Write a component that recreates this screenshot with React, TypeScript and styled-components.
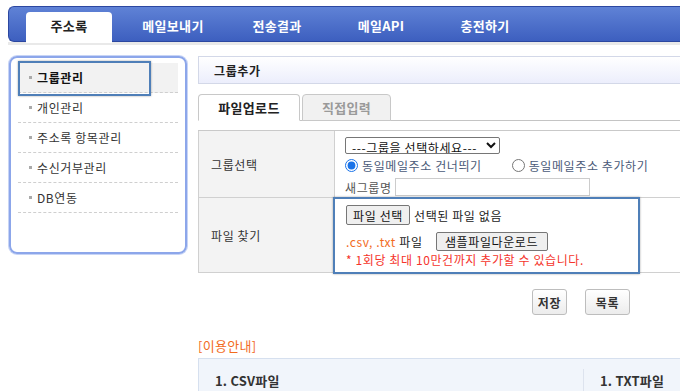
import styled, { createGlobalStyle } from "styled-components";

const Global = createGlobalStyle`
    html, body {
        margin: 0;
        padding: 0;
        background: #fff;
        overflow: hidden;
    }
    body {
        font-family: "Noto Sans CJK KR", "Noto Sans", sans-serif;
        font-size: 12px;
        color: #333;
    }
    * { box-sizing: border-box; }
`;

const Page = styled.div`
    width: 980px;
    padding: 6px 0 0 8px;
`;

const TopNav = styled.nav`
    display: flex;
    align-items: flex-end;
    gap: 18px;
    height: 36px;
    padding-left: 17px;
    background: linear-gradient(#5f82d6, #3d5fbf);
    border: 1px solid #2c47a0;
    border-right: none;
    border-radius: 6px 0 0 6px;
`;

const NavTab = styled.div<{ $active?: boolean }>`
    width: 86px;
    height: 31px;
    margin-bottom: -2px;
    padding-bottom: 5px;
    display: flex;
    align-items: center;
    justify-content: center;
    font-size: 13px;
    font-weight: bold;
    letter-spacing: 0.3px;
    color: ${(p) => (p.$active ? "#222" : "#fff")};
    background: ${(p) => (p.$active ? "#fff" : "transparent")};
    border-radius: 4px 4px 0 0;
`;

const NavShadow = styled.div`
    height: 3px;
    background: #e9e9e9;
`;

const Body = styled.div`
    display: flex;
    align-items: flex-start;
    gap: 11px;
    margin-top: 11px;
    letter-spacing: 0.6px;
`;

const Side = styled.aside`
    position: relative;
    width: 178px;
    height: 198px;
    margin-left: 1px;
    padding: 5px 7px;
    border: 2px solid #8ca6ea;
    border-radius: 8px;
    box-shadow: 0 0 0 1px #c7d4f6;
`;

const SideItem = styled.div<{ $on?: boolean }>`
    display: flex;
    align-items: center;
    gap: 5px;
    height: 30px;
    padding-left: 11px;
    border-bottom: 1px dashed #cfcfcf;
    background: ${(p) => (p.$on ? "#f2f2f2" : "transparent")};
    font-weight: ${(p) => (p.$on ? "bold" : "normal")};
    color: ${(p) => (p.$on ? "#111" : "#333")};
    &::before {
        content: "";
        width: 3px;
        height: 3px;
        background: #aaa;
    }
`;

const Mark = styled.div<{ $x: number; $y: number; $w: number; $h: number }>`
    position: absolute;
    left: ${(p) => p.$x}px;
    top: ${(p) => p.$y}px;
    width: ${(p) => p.$w}px;
    height: ${(p) => p.$h}px;
    border: 2px solid #4f7fb8;
    box-shadow: 0 0 2px rgba(0, 0, 0, 0.35);
    pointer-events: none;
`;

const Main = styled.main`
    position: relative;
    width: 766px;
`;

const TitleBar = styled.div`
    height: 28px;
    display: flex;
    align-items: center;
    padding-left: 15px;
    font-weight: bold;
    color: #222;
    background: linear-gradient(#fff, #eceefc);
    border: 1px solid #d3d8e8;
`;

const TabRow = styled.div`
    display: flex;
    align-items: flex-end;
    gap: 2px;
    margin-top: 10px;
    border-bottom: 1px solid #c4c4c4;
`;

const FormTab = styled.div<{ $active?: boolean }>`
    width: ${(p) => (p.$active ? 102 : 89)}px;
    height: 27px;
    margin-bottom: -1px;
    display: flex;
    align-items: center;
    justify-content: center;
    font-size: 13px;
    font-weight: bold;
    letter-spacing: 0.3px;
    color: ${(p) => (p.$active ? "#222" : "#9a9a9a")};
    background: ${(p) => (p.$active ? "#fff" : "#f1f1f1")};
    border: 1px solid #c8c8c8;
    border-bottom-color: ${(p) => (p.$active ? "#fff" : "#c8c8c8")};
    border-radius: 4px 4px 0 0;
`;

const Table = styled.div`
    margin-top: 9px;
    border-top: 1px solid #c9c9c9;
    display: grid;
    grid-template-columns: 137px 1fr;
    grid-template-rows: 67px 75px;
`;

const Label = styled.div`
    display: flex;
    align-items: center;
    padding-left: 12px;
    background: #f3f3f3;
    border-left: 1px solid #d0d0d0;
    border-bottom: 1px solid #d0d0d0;
    border-right: 1px solid #d0d0d0;
    color: #333;
`;

const Cell = styled.div`
    display: flex;
    flex-direction: column;
    align-items: flex-start;
    padding: 6px 10px 0;
    border-bottom: 1px solid #d0d0d0;
`;

const Select = styled.select`
    width: 155px;
    height: 17px;
    padding: 0 2px;
    font-family: inherit;
    font-size: 12px;
    letter-spacing: 0.6px;
    color: #111;
    border: 1px solid #767676;
    border-radius: 2px;
    background: #fff;
`;

const RadioRow = styled.div`
    display: flex;
    gap: 30px;
    height: 18px;
    margin-top: 2px;
    color: #4a5a78;
`;

const RadioLabel = styled.label`
    display: flex;
    align-items: center;
    gap: 4px;
    input {
        margin: 0;
        width: 13px;
        height: 13px;
        accent-color: #1a73e8;
    }
`;

const NameRow = styled.div`
    display: flex;
    align-items: center;
    gap: 3px;
    height: 18px;
    margin-top: 4px;
    color: #555;
`;

const TextInput = styled.input`
    width: 195px;
    height: 18px;
    border: 1px solid #ccc;
`;

const FileCell = styled(Cell)`
    position: relative;
    padding: 7px 11px 0;
`;

const FileRow = styled.div<{ $mt?: number }>`
    display: flex;
    align-items: center;
    gap: 4px;
    height: 20px;
    margin-top: ${(p) => p.$mt ?? 0}px;
    color: #222;
`;

const NativeBtn = styled.button<{ $w: number; $ml?: number }>`
    width: ${(p) => p.$w}px;
    height: ${(p) => (p.$ml ? 19 : 20)}px;
    margin-left: ${(p) => p.$ml ?? 0}px;
    padding: 0;
    font-family: inherit;
    font-size: 12px;
    letter-spacing: 0.6px;
    color: #111;
    background: #efefef;
    border: 1px solid #767676;
    border-radius: 2px;
`;

const Orange = styled.span`
    color: #f26b1d;
`;

const Notice = styled.div`
    color: #f5342b;
    height: 17px;
    line-height: 17px;
`;

const ActionRow = styled.div`
    display: flex;
    justify-content: center;
    gap: 18px;
    margin-top: 16px;
`;

const ActionBtn = styled.button<{ $w: number }>`
    width: ${(p) => p.$w}px;
    height: 26px;
    padding: 0;
    font-family: inherit;
    font-size: 12px;
    font-weight: bold;
    letter-spacing: 0.6px;
    color: #333;
    background: linear-gradient(#fff, #ececec);
    border: 1px solid #bdbdbd;
    border-radius: 3px;
`;

const GuideTitle = styled.div`
    margin-top: 21px;
    font-size: 13px;
    letter-spacing: 0.3px;
    color: #f26b1d;
`;

const Guide = styled.div`
    display: grid;
    grid-template-columns: 384px 1fr;
    margin-top: 3px;
    height: 60px;
    background: #f1f5fb;
    border: 1px solid #d6e0ef;
`;

const GuideCol = styled.div<{ $line?: boolean }>`
    padding: 12px 16px;
    font-size: 13px;
    font-weight: bold;
    letter-spacing: 0.2px;
    color: #333;
    border-left: ${(p) => (p.$line ? "1px solid #dde3ee" : "none")};
    margin-top: ${(p) => (p.$line ? 10 : 0)}px;
    padding-top: ${(p) => (p.$line ? 2 : 12)}px;
`;

export default function App() {
    const navs = ["주소록", "메일보내기", "전송결과", "메일API", "충전하기"];
    const menu = ["그룹관리", "개인관리", "주소록 항목관리", "수신거부관리", "DB연동"];

    return (
        <Page>
            <Global />
            <TopNav>
                {navs.map((n, i) => (
                    <NavTab key={n} $active={i === 0}>
                        {n}
                    </NavTab>
                ))}
            </TopNav>
            <NavShadow />
            <Body>
                <Side>
                    {menu.map((m, i) => (
                        <SideItem key={m} $on={i === 0}>
                            {m}
                        </SideItem>
                    ))}
                    <Mark $x={7} $y={3} $w={133} $h={35} />
                </Side>
                <Main>
                    <TitleBar>그룹추가</TitleBar>
                    <TabRow>
                        <FormTab $active>파일업로드</FormTab>
                        <FormTab>직접입력</FormTab>
                    </TabRow>
                    <Table>
                        <Label>그룹선택</Label>
                        <Cell>
                            <Select defaultValue="">
                                <option value="">---그룹을 선택하세요---</option>
                            </Select>
                            <RadioRow>
                                <RadioLabel>
                                    <input type="radio" name="dup" defaultChecked />
                                    동일메일주소 건너띄기
                                </RadioLabel>
                                <RadioLabel>
                                    <input type="radio" name="dup" />
                                    동일메일주소 추가하기
                                </RadioLabel>
                            </RadioRow>
                            <NameRow>
                                새그룹명
                                <TextInput />
                            </NameRow>
                        </Cell>
                        <Label>파일 찾기</Label>
                        <FileCell>
                            <FileRow>
                                <NativeBtn $w={64}>파일 선택</NativeBtn>
                                선택된 파일 없음
                            </FileRow>
                            <FileRow $mt={6}>
                                <span>
                                    <Orange>.csv, .txt</Orange> 파일
                                </span>
                                <NativeBtn $w={112} $ml={9}>
                                    샘플파일다운로드
                                </NativeBtn>
                            </FileRow>
                            <Notice>* 1회당 최대 10만건까지 추가할 수 있습니다.</Notice>
                            <Mark $x={-2} $y={-1} $w={307} $h={77} />
                        </FileCell>
                    </Table>
                    <ActionRow>
                        <ActionBtn $w={35}>저장</ActionBtn>
                        <ActionBtn $w={45}>목록</ActionBtn>
                    </ActionRow>
                    <GuideTitle>[이용안내]</GuideTitle>
                    <Guide>
                        <GuideCol>1. CSV파일</GuideCol>
                        <GuideCol $line>1. TXT파일</GuideCol>
                    </Guide>
                </Main>
            </Body>
        </Page>
    );
}
